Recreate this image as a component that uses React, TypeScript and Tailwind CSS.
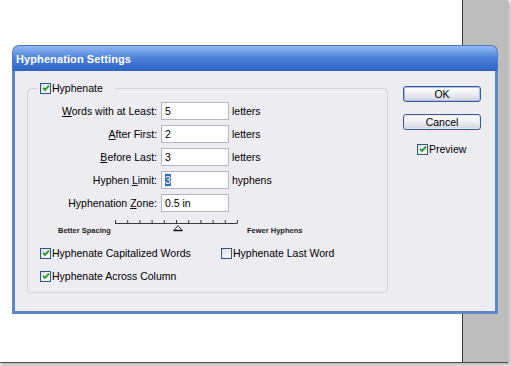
import React from "react";

function Check({ checked }: { checked: boolean }) {
  return (
    <span className="inline-flex w-[11px] h-[11px] shrink-0 items-center justify-center border border-[#2f5585] bg-linear-to-br from-[#dedde4] to-[#fbfbfb]">
      {checked && (
        <svg width="8" height="8" viewBox="0 0 8 8">
          <path d="M1 3.8 L3 5.9 L7 1.6" stroke="#1f9e1f" strokeWidth="1.8" fill="none" />
        </svg>
      )}
    </span>
  );
}

function Field({
  label,
  acc,
  rest,
  pre = "",
  value,
  unit,
  selected = false,
}: {
  label?: string;
  pre?: string;
  acc: string;
  rest: string;
  value: string;
  unit?: string;
  selected?: boolean;
}) {
  return (
    <div className="flex items-center h-[18px]">
      <div className="w-[129px] text-right leading-[12px]">
        {pre}
        <span className="underline underline-offset-[1px]">{acc}</span>
        {rest}
      </div>
      <div className="ml-[4px] w-[68px] h-[18px] border border-[#b3b6c2] bg-white flex items-center pl-[3px] leading-[12px]">
        {selected ? <span className="bg-[#316ac5] text-white">{value}</span> : value}
      </div>
      {unit && <div className="ml-[3px] leading-[12px]">{unit}</div>}
    </div>
  );
}

function Slider() {
  const ticks = Array.from({ length: 11 }, (_, i) => 1 + i * 12.2);
  return (
    <svg width="126" height="14" viewBox="0 0 126 14" className="block">
      <line x1="1" y1="5.5" x2="123" y2="5.5" stroke="#3a3a3a" strokeWidth="1" />
      {ticks.map((x, i) => (
        <line key={i} x1={x + 0.5} y1="2" x2={x + 0.5} y2="5.5" stroke="#3a3a3a" strokeWidth="1" />
      ))}
      <path d="M64 7.5 L60 12.5 L68 12.5 Z" fill="#ffffff" stroke="#2a2a2a" strokeWidth="1" />
      <line x1="59.5" y1="12.5" x2="68.5" y2="12.5" stroke="#111" strokeWidth="1.5" />
    </svg>
  );
}

function Button({ children, def = false }: { children: React.ReactNode; def?: boolean }) {
  return (
    <div
      className={
        "w-[78px] h-[16px] rounded-[3px] border border-[#3a5a95] bg-linear-to-b from-[#ffffff] via-[#eeeef4] to-[#cfd2e0] flex items-center justify-center leading-[12px] " +
        (def ? "shadow-[inset_0_0_0_1px_#a9c1ec]" : "shadow-[inset_0_0_0_1px_#e4e6f0]")
      }
    >
      {children}
    </div>
  );
}

export default function App() {
  return (
    <div className="w-[511px] h-[366px] bg-[#e2e2e2] font-['Liberation_Sans',Arial,sans-serif] text-[10.5px] text-black">
      <div className="relative w-[508px] h-[363px] flex border-b border-[#4a4a4a] shadow-[2px_2px_2px_#bdbdbd]">
        <div className="flex-1 bg-white" />
        <div className="w-[46px] bg-[#bdbdbd] border-l border-[#3c3c3c]" />

        {/* Dialog window */}
        <div className="absolute left-[12px] top-[45px] w-[486px] h-[269px] flex flex-col">
          <div className="h-[26px] rounded-t-[7px] bg-linear-to-b from-[#93b9f2] via-[#4a80da] to-[#2f63c4] border border-b-0 border-[#4d79c6] flex items-center pl-[3px] pt-[1px]">
            <span className="text-white font-bold text-[11px] tracking-[0.1px]">Hyphenation Settings</span>
          </div>
          <div className="flex-1 bg-[#edecf1] border-x-[3px] border-b-[3px] border-[#5f86c9] flex items-start pl-[12px] pt-[11px]">
            <fieldset className="w-[361px] border border-[#d3d2d9] rounded-[4px] pb-[9px]">
              <legend className="ml-[10px] pl-[2px] pr-[12px] flex items-center gap-[1px] leading-[12px]">
                <Check checked />
                <span>Hyphenate</span>
              </legend>
              <div className="mt-[8px] flex flex-col gap-[5px]">
                <Field acc="W" rest="ords with at Least:" value="5" unit="letters" />
                <Field acc="A" rest="fter First:" value="2" unit="letters" />
                <Field acc="B" rest="efore Last:" value="3" unit="letters" />
                <Field pre="Hyphen " acc="L" rest="imit:" value="3" unit="hyphens" selected />
                <Field pre="Hyphenation " acc="Z" rest="one:" value="0.5 in" />
              </div>
              <div className="mt-[6px] flex items-start">
                <div className="ml-[30px] w-[56px] mt-[8px] text-[7.5px] font-bold leading-[10px] text-[#222]">Better Spacing</div>
                <Slider />
                <div className="ml-[7px] mt-[8px] text-[7.5px] font-bold leading-[10px] text-[#222]">Fewer Hyphens</div>
              </div>
              <div className="mt-[10px] ml-[12px] flex flex-col gap-[9px]">
                <div className="flex items-center h-[14px]">
                  <div className="w-[181px] flex items-center gap-[1px]">
                    <Check checked />
                    <span className="leading-[12px]">Hyphenate Capitalized Words</span>
                  </div>
                  <div className="flex items-center gap-[1px]">
                    <Check checked={false} />
                    <span className="leading-[12px]">Hyphenate Last Word</span>
                  </div>
                </div>
                <div className="flex items-center h-[14px] gap-[1px]">
                  <Check checked />
                  <span className="leading-[12px]">Hyphenate Across Column</span>
                </div>
              </div>
            </fieldset>
            <div className="ml-[15px] mt-[4px] flex flex-col">
              <Button def>OK</Button>
              <div className="mt-[12px]">
                <Button>Cancel</Button>
              </div>
              <div className="mt-[13px] ml-[14px] flex items-center gap-[1px]">
                <Check checked />
                <span className="leading-[12px]">Preview</span>
              </div>
            </div>
          </div>
        </div>
      </div>
    </div>
  );
}
